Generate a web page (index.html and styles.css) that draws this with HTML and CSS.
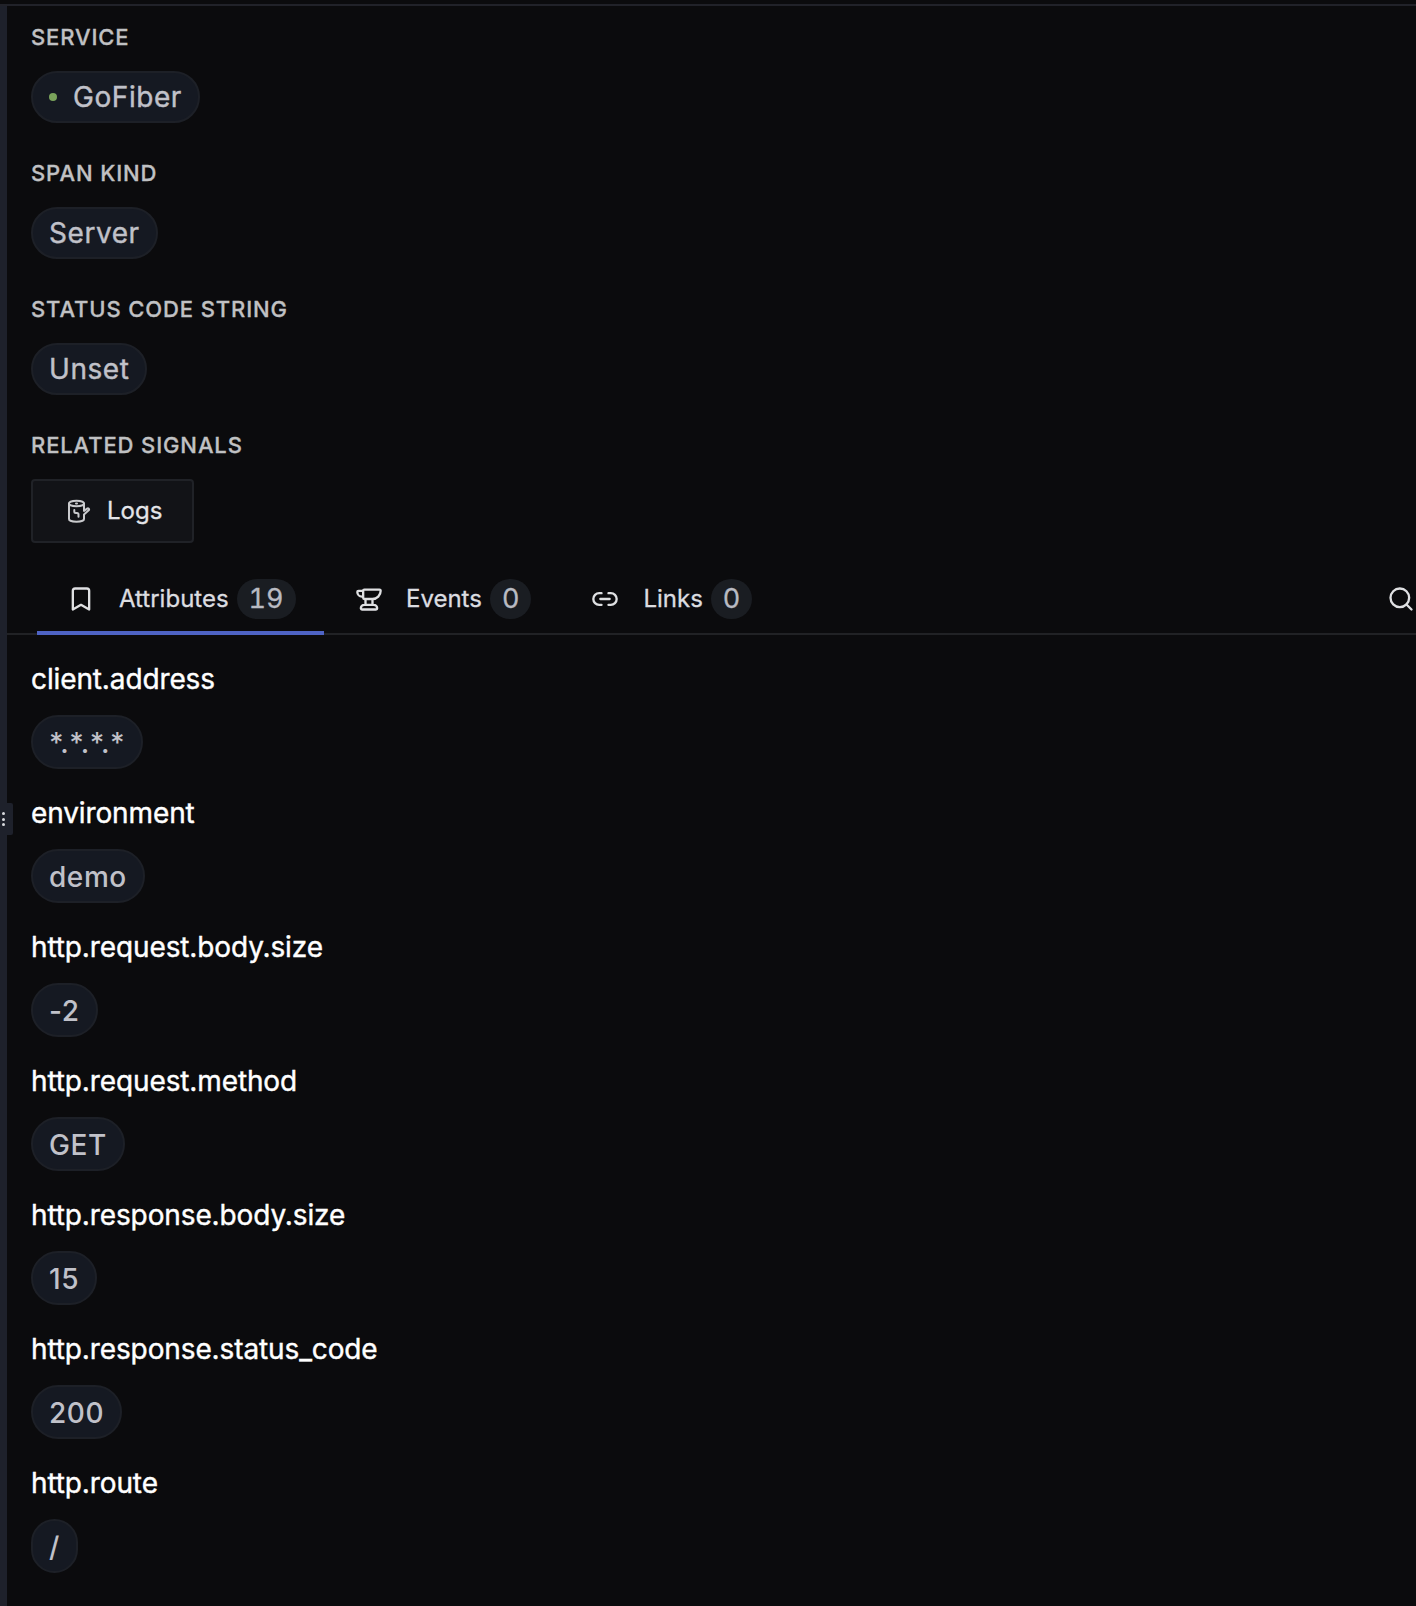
FILE: index.html
```html
<!DOCTYPE html>
<html lang="en">
<head>
<meta charset="utf-8">
<title>Span details</title>
<link rel="stylesheet" href="styles.css">
</head>
<body>
<div class="layout">
  <div class="resizer"><div class="handle"><i></i><i></i><i></i></div></div>
  <main class="panel">
    <section class="summary">
      <div class="field"><div class="label">SERVICE</div><div class="pill"><span class="dot"></span>GoFiber</div></div>
      <div class="field"><div class="label">SPAN KIND</div><div class="pill">Server</div></div>
      <div class="field"><div class="label">STATUS CODE STRING</div><div class="pill">Unset</div></div>
      <div class="field"><div class="label">RELATED SIGNALS</div>
        <button class="logs">
          <svg width="24" height="26" viewBox="0 0 24 26"><g fill="none" stroke="currentColor" stroke-width="2" stroke-linecap="round" stroke-linejoin="round"><ellipse cx="9.500" cy="5.500" rx="7.500" ry="2.800"/><path d="M2 5.500V21c0 1.600 3.400 2.800 7.500 2.800S17 22.600 17 21v-4.500l4.700-4.200c1-1.100-.4-2.600-1.600-1.700L17 13V5.500M9 5.500h1M7.300 12v1.500c0 1 .5 1.500 1.500 1.500h1.200c1 0 1.500.5 1.500 1.500v2.300"/></g></svg>
          <span>Logs</span>
        </button>
      </div>
    </section>
    <nav class="tabs">
      <div class="tab active">
        <svg class="icon" width="28" height="28" viewBox="0 0 24 24"><path d="m19 21-7-4-7 4V5a2 2 0 0 1 2-2h10a2 2 0 0 1 2 2v16z"/></svg>
        <span class="name">Attributes</span><span class="count">19</span>
      </div>
      <div class="tab events">
        <svg class="icon" width="28" height="28" viewBox="0 0 24 24"><path d="M7 10H6a4 4 0 0 1-4-4 1 1 0 0 1 1-1h4M7 5a1 1 0 0 1 1-1h13a1 1 0 0 1 1 1 7 7 0 0 1-7 7H8a1 1 0 0 1-1-1ZM9 12v5M15 12v5M5 20a3 3 0 0 1 3-3h8a3 3 0 0 1 3 3 1 1 0 0 1-1 1H6a1 1 0 0 1-1-1"/></svg>
        <span class="name">Events</span><span class="count">0</span>
      </div>
      <div class="tab links">
        <svg class="icon" width="28" height="28" viewBox="0 0 24 24"><path d="M9 17H7A5 5 0 0 1 7 7h2M15 7h2a5 5 0 1 1 0 10h-2M8 12h8"/></svg>
        <span class="name">Links</span><span class="count">0</span>
      </div>
      <svg class="icon search" width="28" height="28" viewBox="0 0 24 24"><circle cx="11" cy="11" r="8"/><path d="m21 21-4.300-4.300"/></svg>
    </nav>
    <section class="attributes">
      <div class="attr"><div class="key">client.address</div><div class="pill">*.*.*.*</div></div>
      <div class="attr"><div class="key">environment</div><div class="pill">demo</div></div>
      <div class="attr"><div class="key">http.request.body.size</div><div class="pill">-2</div></div>
      <div class="attr"><div class="key">http.request.method</div><div class="pill">GET</div></div>
      <div class="attr"><div class="key">http.response.body.size</div><div class="pill">15</div></div>
      <div class="attr"><div class="key">http.response.status_code</div><div class="pill">200</div></div>
      <div class="attr"><div class="key">http.route</div><div class="pill">/</div></div>
    </section>
  </main>
</div>
</body>
</html>
```
FILE: styles.css
```css
* { box-sizing: border-box; }
body {
  margin: 0;
  height: 1606px;
  overflow: hidden;
  padding-top: 4px;
  background: #0b0b0d;
  font-family: Inter, sans-serif;
}
.layout {
  display: flex;
  height: 1602px;
  border-top: 2px solid #212229;
}
.resizer {
  width: 7px;
  flex: none;
  padding-top: 797px;
  background: #1e212b;
}
.handle {
  position: relative;
  width: 13px;
  height: 32px;
  padding: 9px 0 0 2px;
  display: flex;
  flex-direction: column;
  gap: 2.5px;
  border-radius: 0 2px 2px 0;
  background: #1e212b;
}
.handle i {
  width: 3px;
  height: 3px;
  border-radius: 50%;
  background: #d8d9dd;
}
.panel { flex: 1; min-width: 0; }
.summary {
  display: flex;
  flex-direction: column;
  gap: 32px;
  padding: 13px 24px 0;
}
.field, .attr {
  display: flex;
  flex-direction: column;
  align-items: flex-start;
  gap: 16px;
}
.label {
  font-size: 22px;
  font-weight: 500;
  line-height: 36px;
  letter-spacing: 0.88px;
  color: #c0c1c3;
  -webkit-text-stroke: 0.3px;
}
.pill {
  display: flex;
  align-items: center;
  height: 52px;
  padding: 0 16px;
  border: 2px solid #1d2027;
  border-radius: 27px;
  background: #151922;
  font-size: 28px;
  letter-spacing: 0.56px;
  color: #c0c1c9;
  -webkit-text-stroke: 0.4px;
}
.dot {
  width: 8px;
  height: 8px;
  margin-right: 16px;
  border-radius: 50%;
  background: #7aa35b;
}
.logs {
  display: flex;
  align-items: center;
  gap: 16px;
  width: 163px;
  height: 64px;
  padding: 0 0 0 34px;
  border: 2px solid #202227;
  border-radius: 4px;
  background: #121317;
  font: 400 24px/36px Inter, sans-serif;
  color: #e4e5e8;
  -webkit-text-stroke: 0.3px;
}
.logs svg { color: #c9cacd; }
.tabs {
  display: flex;
  align-items: stretch;
  height: 68px;
  margin-top: 24px;
  border-bottom: 2px solid #212225;
}
.tab {
  display: flex;
  align-items: center;
  height: 68px;
  padding-bottom: 4px;
}
.active {
  width: 287px;
  margin-left: 30px;
  padding-left: 30px;
  border-bottom: 4px solid #4e63c4;
  padding-bottom: 0;
}
.events { margin-left: 31px; }
.links { margin-left: 60px; }
.icon {
  flex: none;
  fill: none;
  stroke: #dfe0e2;
  stroke-width: 2;
  stroke-linecap: round;
  stroke-linejoin: round;
}
.name {
  margin-left: 24px;
  padding-bottom: 1px;
  font-size: 24px;
  color: #dcdde0;
  -webkit-text-stroke: 0.3px;
}
.events .name { margin-left: 23px; }
.count {
  display: flex;
  align-items: center;
  height: 40px;
  margin-left: 8px;
  padding: 0 12px 1px;
  border-radius: 20px;
  background: #1a1d22;
  font-size: 27px;
  font-variant-numeric: tabular-nums;
  color: #b9bbc2;
  -webkit-text-stroke: 0.3px;
}
.search { margin: 18px 1px 0 auto; }
.attributes {
  display: flex;
  flex-direction: column;
  gap: 24px;
  padding: 24px;
}
.key {
  font-size: 28px;
  line-height: 40px;
  letter-spacing: -0.12px;
  color: #fff;
  -webkit-text-stroke: 0.4px;
}
.attr .pill {
  height: 54px;
  padding-top: 1px;
  font-weight: 500;
  -webkit-text-stroke: 0;
}
```
